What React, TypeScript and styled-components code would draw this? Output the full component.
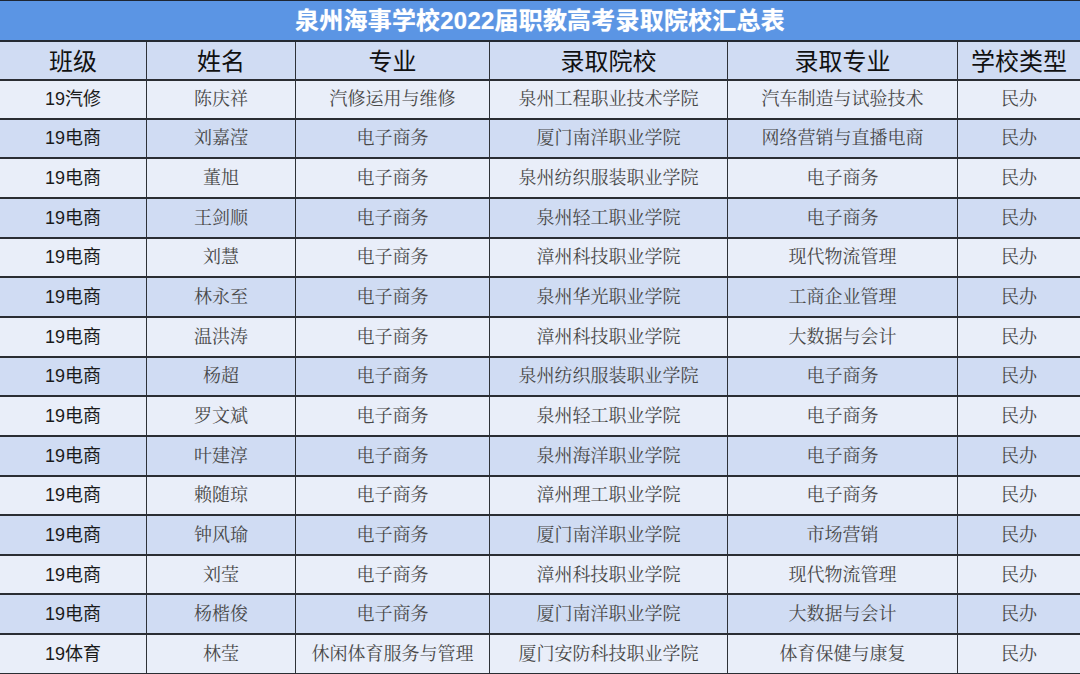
import React from "react";
import styled, { createGlobalStyle } from "styled-components";

const Global = createGlobalStyle`
  html, body { margin: 0; padding: 0; background: #e9eef9; }
  body { font-family: "Liberation Sans", "Noto Sans CJK SC", sans-serif; }
`;

const COLS = "147px 149px 194px 238px 230px 122px";

const Page = styled.div`
  width: 1080px;
  height: 674px;
  overflow: hidden;
  display: flex;
  flex-direction: column;
  background: #e9eef9;
`;

const TitleBar = styled.div`
  box-sizing: border-box;
  height: 42px;
  flex: none;
  background: #5b95e4;
  border-top: 1.5px solid #1e2633;
  border-bottom: 2px solid #242a33;
  padding-bottom: 4px;
  display: flex;
  align-items: center;
  justify-content: center;
  color: #ffffff;
  font-family: "Liberation Sans", "Noto Sans CJK SC", sans-serif;
  font-weight: 700;
  font-size: 24px;
  letter-spacing: 0.2px;
  text-shadow: 0 0 1px rgba(255, 255, 255, 0.6);
`;

const Row = styled.div<{ $tone: "head" | "light" | "dark"; $h: number }>`
  box-sizing: border-box;
  display: grid;
  grid-template-columns: ${COLS};
  height: ${(p) => p.$h}px;
  flex: none;
  border-bottom: 2px solid #2a2d33;
  background: ${(p) => (p.$tone === "light" ? "#e9eef9" : "#d0dcf3")};
`;

const Cell = styled.div<{ $kind: "head" | "first" | "body"; $last?: boolean }>`
  box-sizing: border-box;
  display: flex;
  align-items: center;
  justify-content: center;
  white-space: nowrap;
  border-right: ${(p) => (p.$last ? "none" : "1.5px solid #2e3238")};
  font-family: ${(p) =>
    p.$kind === "body"
      ? `"Noto Serif CJK SC", "Noto Sans CJK SC", serif`
      : `"Liberation Sans", "Noto Sans CJK SC", sans-serif`};
  font-size: ${(p) => (p.$kind === "head" ? "24px" : "18px")};
  color: ${(p) => (p.$kind === "head" ? "#111" : p.$kind === "first" ? "#1a1a1a" : "#484848")};
  padding-bottom: ${(p) => (p.$kind === "head" ? "4px" : "4px")};
`;

const headers = ["班级", "姓名", "专业", "录取院校", "录取专业", "学校类型"];

const rows: string[][] = [
  ["19汽修", "陈庆祥", "汽修运用与维修", "泉州工程职业技术学院", "汽车制造与试验技术", "民办"],
  ["19电商", "刘嘉滢", "电子商务", "厦门南洋职业学院", "网络营销与直播电商", "民办"],
  ["19电商", "董旭", "电子商务", "泉州纺织服装职业学院", "电子商务", "民办"],
  ["19电商", "王剑顺", "电子商务", "泉州轻工职业学院", "电子商务", "民办"],
  ["19电商", "刘慧", "电子商务", "漳州科技职业学院", "现代物流管理", "民办"],
  ["19电商", "林永至", "电子商务", "泉州华光职业学院", "工商企业管理", "民办"],
  ["19电商", "温洪涛", "电子商务", "漳州科技职业学院", "大数据与会计", "民办"],
  ["19电商", "杨超", "电子商务", "泉州纺织服装职业学院", "电子商务", "民办"],
  ["19电商", "罗文斌", "电子商务", "泉州轻工职业学院", "电子商务", "民办"],
  ["19电商", "叶建淳", "电子商务", "泉州海洋职业学院", "电子商务", "民办"],
  ["19电商", "赖随琼", "电子商务", "漳州理工职业学院", "电子商务", "民办"],
  ["19电商", "钟风瑜", "电子商务", "厦门南洋职业学院", "市场营销", "民办"],
  ["19电商", "刘莹", "电子商务", "漳州科技职业学院", "现代物流管理", "民办"],
  ["19电商", "杨楷俊", "电子商务", "厦门南洋职业学院", "大数据与会计", "民办"],
  ["19体育", "林莹", "休闲体育服务与管理", "厦门安防科技职业学院", "体育保健与康复", "民办"],
];

export default function App() {
  return (
    <>
      <Global />
      <Page>
        <TitleBar>泉州海事学校2022届职教高考录取院校汇总表</TitleBar>
        <Row $tone="head" $h={39}>
          {headers.map((h, i) => (
            <Cell key={h} $kind="head" $last={i === headers.length - 1}>
              {h}
            </Cell>
          ))}
        </Row>
        {rows.map((r, ri) => (
          <Row key={ri} $tone={ri % 2 === 0 ? "light" : "dark"} $h={ri === 0 ? 38.6 : 39.66}>
            {r.map((c, ci) => (
              <Cell key={ci} $kind={ci === 0 ? "first" : "body"} $last={ci === r.length - 1}>
                {c}
              </Cell>
            ))}
          </Row>
        ))}
      </Page>
    </>
  );
}
